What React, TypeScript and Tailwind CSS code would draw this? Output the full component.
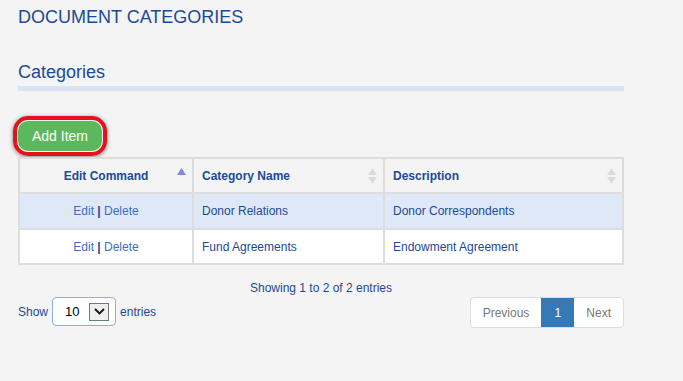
import { useState } from "react";

const rows = [
  { name: "Donor Relations", desc: "Donor Correspondents" },
  { name: "Fund Agreements", desc: "Endowment Agreement" },
];

function SortIcon({ active }: { active?: boolean }) {
  if (active) {
    return (
      <svg width="9" height="8" viewBox="0 0 9 8" className="absolute right-[6px] top-[9px]">
        <path d="M4.5 0 L9 7 L0 7 Z" fill="#8585e0" />
      </svg>
    );
  }
  return (
    <svg width="9" height="16" viewBox="0 0 9 16" className="absolute right-[6px] top-[9px]">
      <path d="M4.5 0 L9 7 L0 7 Z" fill="#dcdcdc" />
      <path d="M4.5 16 L9 9 L0 9 Z" fill="#dcdcdc" />
    </svg>
  );
}

export default function App() {
  const [size, setSize] = useState("10");

  return (
    <div
      className="w-[683px] h-[381px] bg-[#f4f4f4] px-[18px] pt-[7px] text-[#1c4a97]"
      style={{ fontFamily: '"Liberation Sans", Arial, sans-serif' }}
    >
      <h1 className="text-[18px] leading-[21px]">DOCUMENT CATEGORIES</h1>
      <div className="w-[606px] mt-[33px] border-b-[5px] border-[#dae3f3] pb-[3px]">
        <h2 className="text-[18px] leading-[22px]">Categories</h2>
      </div>

      <div className="mt-[25px] ml-[-5px] w-fit rounded-[15px] border-[4px] border-[#e3121c] p-[1px] shadow-[0_1px_4px_rgba(0,0,0,0.5)]">
        <button className="h-[30px] w-[84px] rounded-[10px] bg-[#5cb85c] text-white text-[14px]">
          Add Item
        </button>
      </div>

      <table className="mt-[1px] w-[606px] border-collapse text-[12px]">
        <thead>
          <tr className="h-[35px] bg-[#f4f4f4] font-bold">
            <th className="relative w-[174px] border-2 border-[#dddddd] text-center font-bold">
              Edit Command
              <SortIcon active />
            </th>
            <th className="relative w-[191px] border-2 border-[#dddddd] text-left pl-[8px] font-bold">
              Category Name
              <SortIcon />
            </th>
            <th className="relative border-2 border-[#dddddd] text-left pl-[8px] font-bold">
              Description
              <SortIcon />
            </th>
          </tr>
        </thead>
        <tbody>
          {rows.map((row, i) => (
            <tr key={row.name} className={i === 0 ? "h-[36px] bg-[#dfe8f6]" : "h-[35px] bg-white"}>
              <td className="border-2 border-[#dddddd] text-center">
                <span className="text-[#3a6fc4]">Edit</span>
                <span className="font-bold"> | </span>
                <span className="text-[#3a6fc4]">Delete</span>
              </td>
              <td className="border-2 border-[#dddddd] pl-[8px]">{row.name}</td>
              <td className="border-2 border-[#dddddd] pl-[8px]">{row.desc}</td>
            </tr>
          ))}
        </tbody>
      </table>

      <div className="w-[606px] mt-[16px] text-center text-[12px] leading-[14px]">
        Showing 1 to 2 of 2 entries
      </div>

      <div className="w-[606px] mt-[2px] flex items-start justify-between">
        <label className="flex items-center gap-[4px] text-[12px]">
          <span>Show</span>
          <span className="flex items-center h-[29px] w-[64px] bg-white border border-[#8fb0dc] rounded-[4px] pl-[12px] pr-[4px] gap-[8px]">
            <span className="text-[13px] text-black w-[16px]">{size}</span>
            <span
              className="flex items-center justify-center w-[20px] h-[18px] bg-[#efefef] border border-[#767676]"
              onClick={() => setSize(size)}
            >
              <svg width="11" height="7" viewBox="0 0 11 7">
                <path d="M1 1 L5.5 5.5 L10 1" fill="none" stroke="#111" strokeWidth="1.8" />
              </svg>
            </span>
          </span>
          <span>entries</span>
        </label>

        <div className="flex h-[31px] rounded-[4px] border border-[#dddddd] bg-white text-[12px] overflow-hidden">
          <span className="flex items-center px-[12px] text-[#777777]">Previous</span>
          <span className="flex items-center px-[12px] bg-[#337ab7] text-white w-[33px] justify-center">1</span>
          <span className="flex items-center px-[12px] text-[#777777]">Next</span>
        </div>
      </div>
    </div>
  );
}
